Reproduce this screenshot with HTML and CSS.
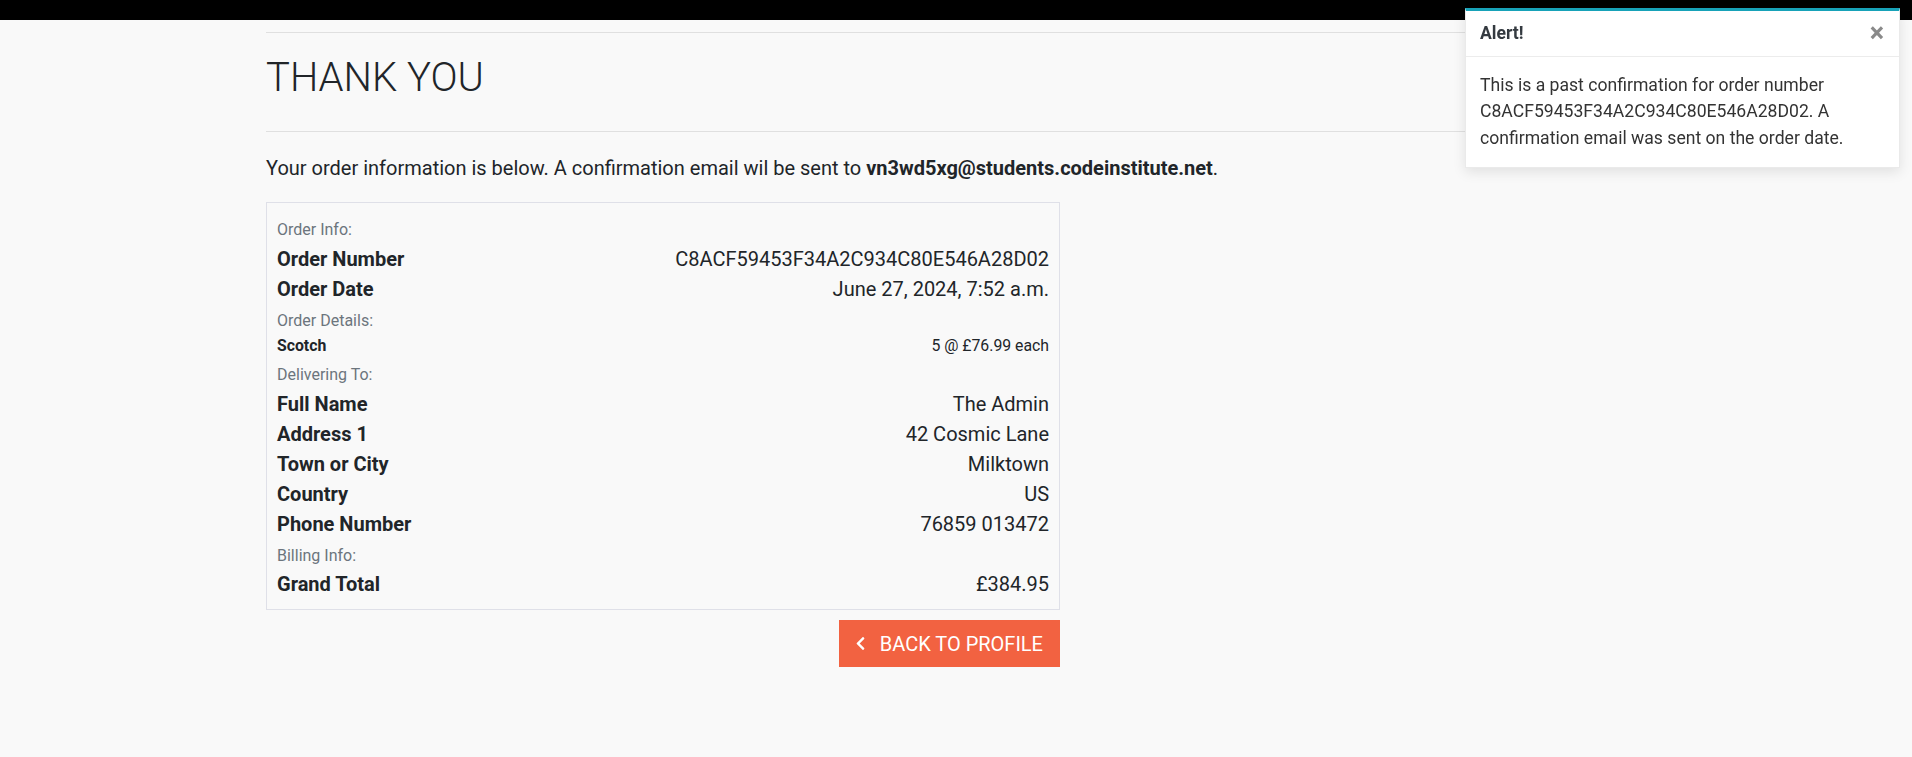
FILE: index.html
```html
<!DOCTYPE html>
<html lang="en">
<head>
<meta charset="utf-8">
<title>Thank You</title>
<link rel="stylesheet" href="styles.css">
</head>
<body>
<div class="topbar"></div>
<main class="container">
  <hr class="rule rule-top">
  <h1 class="title">THANK YOU</h1>
  <hr class="rule">
  <p class="intro">Your order information is below. A confirmation email wil be sent to <strong>vn3wd5xg@students.codeinstitute.net</strong>.</p>

  <section class="order-card">
    <p class="label">Order Info:</p>
    <div class="row"><span class="key">Order Number</span><span class="val">C8ACF59453F34A2C934C80E546A28D02</span></div>
    <div class="row"><span class="key">Order Date</span><span class="val">June 27, 2024, 7:52 a.m.</span></div>

    <p class="label">Order Details:</p>
    <div class="row row-small"><span class="key">Scotch</span><span class="val">5 @ £76.99 each</span></div>

    <p class="label">Delivering To:</p>
    <div class="row"><span class="key">Full Name</span><span class="val">The Admin</span></div>
    <div class="row"><span class="key">Address 1</span><span class="val">42 Cosmic Lane</span></div>
    <div class="row"><span class="key">Town or City</span><span class="val">Milktown</span></div>
    <div class="row"><span class="key">Country</span><span class="val">US</span></div>
    <div class="row"><span class="key">Phone Number</span><span class="val">76859 013472</span></div>

    <p class="label">Billing Info:</p>
    <div class="row"><span class="key">Grand Total</span><span class="val">£384.95</span></div>
  </section>

  <div class="actions">
    <a class="btn-back" href="#">
      <svg class="chev" viewBox="0 0 320 512" aria-hidden="true"><path d="M34.52 239.03L228.87 44.69c9.37-9.37 24.57-9.37 33.94 0l22.67 22.67c9.36 9.36 9.37 24.52.04 33.9L131.49 256l154.02 154.75c9.34 9.38 9.32 24.54-.04 33.9l-22.67 22.67c-9.37 9.37-24.57 9.37-33.94 0L34.52 272.97c-9.37-9.37-9.37-24.57 0-33.94z"/></svg>
      <span>BACK TO PROFILE</span>
    </a>
  </div>
</main>

<div class="toast">
  <div class="toast-header">
    <strong class="toast-title">Alert!</strong>
    <span class="toast-close">×</span>
  </div>
  <div class="toast-body">This is a past confirmation for order number C8ACF59453F34A2C934C80E546A28D02. A confirmation email was sent on the order date.</div>
</div>
</body>
</html>
```

FILE: styles.css
```css
* { box-sizing: border-box; }

html, body {
  margin: 0;
  padding: 0;
}

body {
  background: #f9f9f9;
  color: #212529;
  font-family: Roboto, "Liberation Sans", Arial, sans-serif;
  font-size: 20px;
  line-height: 1.5;
}

.topbar {
  height: 20px;
  background: #000;
}

.container {
  margin-left: 266px;
  width: 1380px;
}

.rule {
  border: 0;
  border-top: 1px solid #e0e0e0;
  margin: 0;
}

.rule-top {
  margin-top: 12px;
}

.title {
  font-size: 40px;
  font-weight: 300;
  line-height: 48px;
  margin: 21px 0 29px;
}

.intro {
  margin: 21px 0 19px;
}

.intro strong {
  font-weight: 700;
}

.order-card {
  width: 794px;
  border: 1px solid #dfe0e8;
  padding: 11px 10px 10px;
}

.label {
  margin: 5px 0 1.5px;
  font-size: 16px;
  line-height: 24px;
  color: #6c757d;
}

.order-card .label:first-child {
  margin-top: 4px;
}

.row {
  display: flex;
  justify-content: space-between;
  line-height: 30px;
}

.key {
  font-weight: 700;
}

.row-small {
  font-size: 15.8px;
  line-height: 24px;
}

.actions {
  width: 794px;
  display: flex;
  justify-content: flex-end;
  margin-top: 10px;
}

.btn-back {
  display: flex;
  align-items: center;
  height: 47px;
  padding: 0 17px 0 16px;
  background: #f26241;
  color: #fff;
  text-decoration: none;
  font-size: 20px;
}

.chev {
  width: 11px;
  height: 15px;
  fill: #fff;
  margin-right: 14px;
}

.toast {
  position: fixed;
  top: 8px;
  right: 12px;
  width: 435px;
  background: #fff;
  border: 1px solid rgba(0, 0, 0, 0.08);
  border-top: 3px solid #17a2b8;
  box-shadow: 0 4px 12px rgba(0, 0, 0, 0.1);
  color: #333;
}

.toast-header {
  display: flex;
  justify-content: space-between;
  align-items: center;
  height: 46px;
  padding: 0 15px 0 14px;
  border-bottom: 1px solid #ececec;
}

.toast-title {
  font-size: 17.6px;
  font-weight: 700;
  color: #343a40;
}

.toast-close {
  font-size: 27px;
  font-weight: 700;
  color: #8a8a8a;
  line-height: 1;
}

.toast-body {
  padding: 15px 15px 16px 14px;
  font-size: 17.6px;
  line-height: 26.4px;
}
```
